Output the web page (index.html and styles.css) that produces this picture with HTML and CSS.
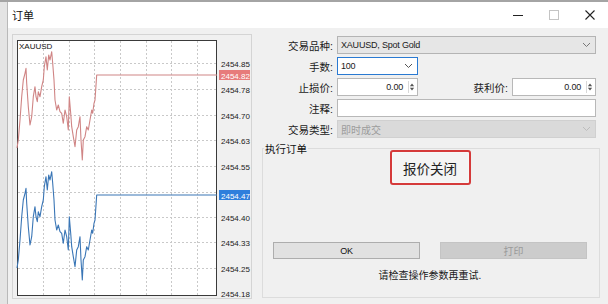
FILE: index.html
```html
<!DOCTYPE html>
<html lang="zh-CN">
<head>
<meta charset="utf-8">
<title>订单</title>
<link rel="stylesheet" href="styles.css">
</head>
<body>
<div class="screen">
  <div class="edge"></div>
  <div class="window">
    <div class="titlebar">
      <span class="title">订单</span>
      <div class="caption-btns">
        <span class="cbtn"><svg width="12" height="12" viewBox="0 0 12 12"><line x1="1" y1="6.5" x2="11" y2="6.5" stroke="#222" stroke-width="1"/></svg></span>
        <span class="cbtn"><svg width="12" height="12" viewBox="0 0 12 12"><rect x="1.5" y="1.5" width="9" height="9" fill="none" stroke="#c4c4c4" stroke-width="1"/></svg></span>
        <span class="cbtn"><svg width="12" height="12" viewBox="0 0 12 12"><path d="M1.5 1.5 L10.5 10.5 M10.5 1.5 L1.5 10.5" stroke="#222" stroke-width="1.1" fill="none"/></svg></span>
      </div>
    </div>
    <div class="body">
      <div class="chart-panel">
        <svg class="chart" width="238" height="263" viewBox="13 35 238 263">
          <rect x="17.5" y="40.5" width="199" height="255" fill="#fff" stroke="#3a3a3a" stroke-width="1"/>
          <g stroke="#c9c9c9" stroke-width="1" stroke-dasharray="2 2" fill="none">
            <path d="M43.5 41 V295 M69.5 41 V295 M94.5 41 V295 M120.5 41 V295 M146.5 41 V295 M171.5 41 V295 M197.5 41 V295"/>
            <path d="M18 63.5 H218 M18 89.5 H218 M18 115.5 H218 M18 140.5 H218 M18 166.5 H218 M18 192.5 H218 M18 217.5 H218 M18 242.5 H218 M18 268.5 H218"/>
          </g>
          <text x="19" y="49" class="sym">XAUUSD</text>
          <polyline fill="none" stroke="#d08585" stroke-width="1.1" stroke-linejoin="round"
            points="17,148 18.3,140 20,120 21.7,96.7 23.3,80 25,73.3 26,68.3 26.7,83.3 28.3,106.7 30,125 31.7,116.7 33.3,96.7 35,86.7 36,96.7 37.3,101.7 38.3,91.7 40,96.7 41.7,86.7 43.3,80 44.3,66.7 46,56.7 47.3,70 48.7,55 50,60 51.7,51.7 52.7,63.3 54,80 55,100 56.7,110 58.3,105 60,111.7 61.7,113.3 63.3,123.3 65,110 66.7,116.7 68.3,130 69.3,96.7 70.7,113.3 71.7,126.7 73.3,136.7 75,146.7 76.7,130 78.3,126.7 80,116.7 81,140 82.3,160 83.3,140 85,136.7 86.7,126.7 88.3,130 90,120 91.7,110 92.7,113.3 94,103.3 95,100 96.7,75 217,75"/>
          <polyline fill="none" stroke="#3a76b6" stroke-width="1.1" stroke-linejoin="round" transform="translate(0 120)"
            points="17,148 18.3,140 20,120 21.7,96.7 23.3,80 25,73.3 26,68.3 26.7,83.3 28.3,106.7 30,125 31.7,116.7 33.3,96.7 35,86.7 36,96.7 37.3,101.7 38.3,91.7 40,96.7 41.7,86.7 43.3,80 44.3,66.7 46,56.7 47.3,70 48.7,55 50,60 51.7,51.7 52.7,63.3 54,80 55,100 56.7,110 58.3,105 60,111.7 61.7,113.3 63.3,123.3 65,110 66.7,116.7 68.3,130 69.3,96.7 70.7,113.3 71.7,126.7 73.3,136.7 75,146.7 76.7,130 78.3,126.7 80,116.7 81,140 82.3,160 83.3,140 85,136.7 86.7,126.7 88.3,130 90,120 91.7,110 92.7,113.3 94,103.3 95,100 96.7,75 217,75"/>
          <g class="price">
            <text x="221" y="67">2454.85</text>
            <text x="221" y="93">2454.78</text>
            <text x="221" y="119">2454.70</text>
            <text x="221" y="144">2454.63</text>
            <text x="221" y="170">2454.55</text>
            <text x="221" y="221">2454.40</text>
            <text x="221" y="246">2454.33</text>
            <text x="221" y="272">2454.25</text>
            <text x="221" y="297">2454.18</text>
          </g>
          <rect x="219" y="70" width="31" height="10" fill="#e77b7b"/>
          <text x="221" y="78.5" class="badge">2454.82</text>
          <rect x="219" y="190" width="31" height="10" fill="#2f7fdc"/>
          <text x="221" y="198.5" class="badge">2454.47</text>
        </svg>
      </div>
      <div class="order">
        <div class="form">
          <label class="lbl">交易品种:</label>
          <div class="ctl select span3"><span class="latin">XAUUSD, Spot Gold</span><svg class="chev" width="9" height="6" viewBox="0 0 9 6"><polyline points="1,1 4.5,4.5 8,1" fill="none" stroke="#777" stroke-width="1"/></svg></div>

          <label class="lbl">手数:</label>
          <div class="ctl input focus"><span class="latin">100</span><svg class="chev" width="9" height="6" viewBox="0 0 9 6"><polyline points="1,1 4.5,4.5 8,1" fill="none" stroke="#555" stroke-width="1"/></svg></div>
          <span class="blank2"></span>

          <label class="lbl">止损价:</label>
          <div class="ctl input num"><span class="latin">0.00</span><svg class="spin" width="7" height="12" viewBox="0 0 7 12"><path d="M3.5 2 L6 5 H1 Z M3.5 10 L6 7 H1 Z" fill="#555"/></svg></div>
          <label class="lbl">获利价:</label>
          <div class="ctl input num"><span class="latin">0.00</span><svg class="spin" width="7" height="12" viewBox="0 0 7 12"><path d="M3.5 2 L6 5 H1 Z M3.5 10 L6 7 H1 Z" fill="#555"/></svg></div>

          <label class="lbl">注释:</label>
          <div class="ctl input span3"></div>

          <label class="lbl">交易类型:</label>
          <div class="ctl disabled span3"><span>即时成交</span><svg class="chev" width="9" height="6" viewBox="0 0 9 6"><polyline points="1,1 4.5,4.5 8,1" fill="none" stroke="#bcbcbc" stroke-width="1"/></svg></div>
        </div>
        <fieldset class="group">
          <legend>执行订单</legend>
          <div class="notice">报价关闭</div>
          <div class="buttons">
            <button class="btn latin">OK</button>
            <button class="btn off" disabled>打印</button>
          </div>
          <p class="msg">请检查操作参数再重试.</p>
        </fieldset>
      </div>
    </div>
  </div>
</div>
</body>
</html>
```

FILE: styles.css
```css
* { box-sizing: border-box; }
html, body {
  margin: 0;
  padding: 0;
}
body {
  width: 608px;
  height: 304px;
  overflow: hidden;
  background: #f0f0f0;
  font-family: "Liberation Sans", "Noto Sans CJK SC", sans-serif;
  font-size: 10px;
  color: #1a1a1a;
}
.screen {
  display: flex;
  height: 304px;
  border-top: 2px solid #a4a4a4;
}
.edge {
  width: 8px;
  background: #e4e4e4;
  border-right: 1px solid #b9b9b9;
}
.window {
  flex: 1;
  display: flex;
  flex-direction: column;
}
.titlebar {
  height: 26px;
  background: #fff;
  display: flex;
  align-items: center;
  justify-content: space-between;
}
.title {
  font-size: 11px;
  padding-left: 4px;
  color: #111;
}
.caption-btns {
  display: flex;
  height: 100%;
}
.cbtn {
  width: 36px;
  display: flex;
  align-items: center;
  justify-content: center;
}
.body {
  flex: 1;
  display: flex;
  gap: 8px;
  padding: 6px 8px 5px 4px;
}
.chart-panel {
  width: 240px;
  height: 265px;
  border: 1px solid #d4d4d4;
  background: #f0f0f0;
}
.chart { display: block; }
.chart .sym {
  font-family: "Liberation Sans", sans-serif;
  font-size: 8px;
  fill: #111;
}
.chart .price text {
  font-family: "Liberation Sans", sans-serif;
  font-size: 8px;
  fill: #222;
}
.chart .badge {
  font-family: "Liberation Sans", sans-serif;
  font-size: 8px;
  fill: #fff;
}
.order {
  width: 340px;
  display: flex;
  flex-direction: column;
  padding-top: 2px;
}
.form {
  display: grid;
  grid-template-columns: 73px 81px 86px 84px;
  grid-auto-rows: 18px;
  column-gap: 4px;
  row-gap: 3px;
}
.lbl {
  display: flex;
  align-items: center;
  justify-content: flex-end;
  font-size: 10.5px;
  color: #1a1a1a;
}
.span3 { grid-column: span 3; }
.blank2 { grid-column: span 2; }
.ctl {
  display: flex;
  align-items: center;
  justify-content: space-between;
  padding: 0 4px 0 3px;
  border: 1px solid #b8b8b8;
  background: #fff;
}
.latin {
  font-family: "Liberation Sans", sans-serif;
  font-size: 9px;
  letter-spacing: -0.2px;
}
.select {
  background: #e6e6e6;
  border-color: #b4b4b4;
}
.focus {
  border-color: #2a7ad2;
}
.num {
  padding-right: 2px;
}
.num .latin {
  flex: 1;
  text-align: right;
  padding-right: 5px;
}
.spin {
  border-left: 1px solid #d8d8d8;
  padding-left: 0;
}
.disabled {
  background: #dadada;
  border-color: #d0d0d0;
  color: #9c9c9c;
  font-size: 10px;
}
.group {
  margin: 3px 0 0 2px;
  padding: 0 12px 0 10px;
  border: 1px solid #dcdcdc;
  height: 157px;
  display: flex;
  flex-direction: column;
  align-items: center;
  min-width: 0;
}
.group legend {
  font-size: 10.5px;
  padding: 0 1px;
  margin-left: -9px;
  color: #111;
}
.notice {
  margin-top: -6px;
  width: 81px;
  height: 35px;
  border: 2px solid #d53a3a;
  border-radius: 3px;
  background: #f4f4f4;
  box-shadow: inset 0 0 2px #fff;
  display: flex;
  align-items: center;
  justify-content: center;
  font-size: 13.5px;
  color: #222;
  font-family: "Noto Sans CJK SC", sans-serif;
}
.buttons {
  margin-top: 57px;
  display: flex;
  gap: 20px;
  align-self: stretch;
}
.btn {
  flex: 1;
  height: 17px;
  border: 1px solid #adadad;
  background: #e1e1e1;
  padding: 0;
  font-size: 9px;
  color: #111;
}
.btn.off {
  background: #cccccc;
  border-color: #c4c4c4;
  color: #9a9a9a;
  font-family: "Noto Sans CJK SC", sans-serif;
  font-size: 10px;
}
.msg {
  margin: 8px 0 0 0;
  font-size: 10px;
  color: #1a1a1a;
}
```
